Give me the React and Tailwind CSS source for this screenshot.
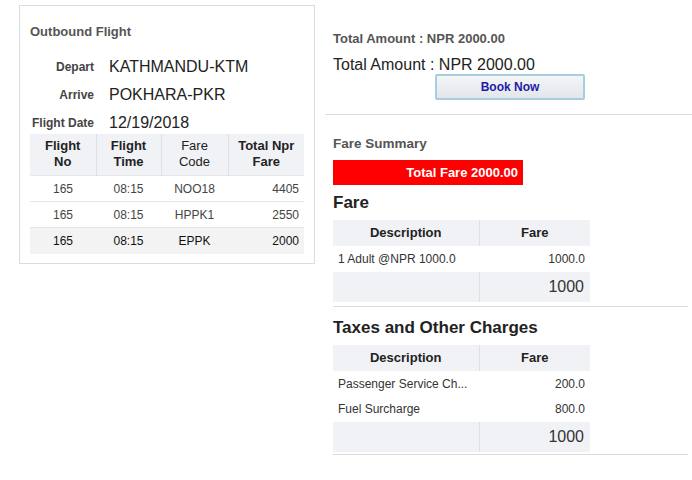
import React from "react";

const flights = [
  { no: "165", time: "08:15", code: "NOO18", fare: "4405" },
  { no: "165", time: "08:15", code: "HPPK1", fare: "2550" },
  { no: "165", time: "08:15", code: "EPPK", fare: "2000", active: true },
];

function InfoRow({ label, value }) {
  return (
    <div className="flex items-center h-[28px]">
      <div className="w-[64px] text-right text-[12px] font-bold text-[#444]">{label}</div>
      <div className="ml-[15px] text-[16px] text-[#222]">{value}</div>
    </div>
  );
}

function FareTable({ rows, total }) {
  return (
    <table className="w-[257px] border-collapse text-[#333]">
      <thead>
        <tr className="bg-[#f1f2f5] h-[26px]">
          <th className="w-[146px] text-[13px] font-bold text-[#222] border-r border-[#dde0e5]">Description</th>
          <th className="text-[13px] font-bold text-[#222]">Fare</th>
        </tr>
      </thead>
      <tbody>
        {rows.map((r, i) => (
          <tr key={i} className={r.short ? "h-[25px]" : "h-[26px]"}>
            <td className="pl-[5px] text-[12px] text-[#333] whitespace-nowrap">{r.desc}</td>
            <td className="pr-[5px] text-right text-[12px] text-[#333]">{r.fare}</td>
          </tr>
        ))}
        <tr className="bg-[#f1f2f5] h-[30px]">
          <td className="border-r border-[#dde0e5]"></td>
          <td className="pr-[6px] text-right text-[16px] text-[#333]">{total}</td>
        </tr>
      </tbody>
    </table>
  );
}

export default function App() {
  return (
    <div className="w-[692px] h-[480px] bg-white flex font-['Liberation_Sans',Arial,sans-serif]">
      {/* Outbound flight card */}
      <div className="ml-[19px] mt-[5px] w-[296px] h-[259px] border border-[#dcdcdc] px-[10px]">
        <div className="mt-[16px] text-[13px] font-bold text-[#555]">Outbound Flight</div>
        <div className="mt-[11px]">
          <InfoRow label="Depart" value="KATHMANDU-KTM" />
          <InfoRow label="Arrive" value="POKHARA-PKR" />
          <InfoRow label="Flight Date" value="12/19/2018" />
        </div>
        <table className="w-[274px] border-collapse text-[#333] -mt-[3px]">
          <thead>
            <tr className="bg-[#f1f2f5] h-[42px] text-[13px] font-bold text-[#222] leading-[16px]">
              <th className="w-[66px] border-r border-[#dde0e5]">Flight<br />No</th>
              <th className="w-[65px] border-r border-[#dde0e5]">Flight<br />Time</th>
              <th className="w-[67px] border-r border-[#dde0e5] font-normal">Fare<br />Code</th>
              <th>Total Npr<br />Fare</th>
            </tr>
          </thead>
          <tbody>
            {flights.map((f, i) => (
              <tr
                key={i}
                className={`h-[26px] text-[12px] border-t border-[#e6e6e6] ${f.active ? "bg-[#f3f3f3] text-[#111]" : "text-[#444]"}`}
              >
                <td className="text-center">{f.no}</td>
                <td className="text-center">{f.time}</td>
                <td className="text-center">{f.code}</td>
                <td className="text-right pr-[5px]">{f.fare}</td>
              </tr>
            ))}
          </tbody>
        </table>
      </div>

      {/* Right side */}
      <div className="ml-[10px] flex-1">
        <div className="pl-[8px] pt-[31px]">
          <div className="text-[13px] font-bold text-[#555] leading-[15px]">Total Amount : NPR 2000.00</div>
          <div className="mt-[10px] text-[16px] text-[#222] leading-[18px]">Total Amount : NPR 2000.00</div>
          <div className="ml-[102px] w-[150px]">
            <button className="w-[150px] h-[26px] border-2 border-[#a6cde0] rounded-[2px] bg-gradient-to-b from-[#f4f5f7] to-[#e3e6ea] text-[12px] font-bold text-[#1c1ca8]">
              Book Now
            </button>
          </div>
        </div>
        <div className="mt-[14px] border-t border-[#dcdcdc]"></div>

        <div className="pl-[8px]">
          <div className="mt-[21px] text-[13.5px] font-bold text-[#555] leading-[16px]">Fare Summary</div>
          <div className="mt-[8px] w-[190px] h-[25px] bg-[#ff0000] flex items-center justify-end pr-[5px] text-[13px] font-bold text-white">
            Total Fare 2000.00
          </div>
          <div className="mt-[6px] text-[17px] font-bold text-[#222] leading-[24px]">Fare</div>
          <div className="mt-[5px]">
            <FareTable rows={[{ desc: "1 Adult @NPR 1000.0", fare: "1000.0" }]} total="1000" />
          </div>
          <div className="mt-[4px] mr-[4px] border-t border-[#dcdcdc]"></div>
          <div className="mt-[9px] text-[17px] font-bold text-[#222] leading-[24px]">Taxes and Other Charges</div>
          <div className="mt-[5px]">
            <FareTable
              rows={[
                { desc: "Passenger Service Ch...", fare: "200.0", short: true },
                { desc: "Fuel Surcharge", fare: "800.0" },
              ]}
              total="1000"
            />
          </div>
          <div className="mt-[2px] mr-[4px] border-t border-[#dcdcdc]"></div>
        </div>
      </div>
    </div>
  );
}
